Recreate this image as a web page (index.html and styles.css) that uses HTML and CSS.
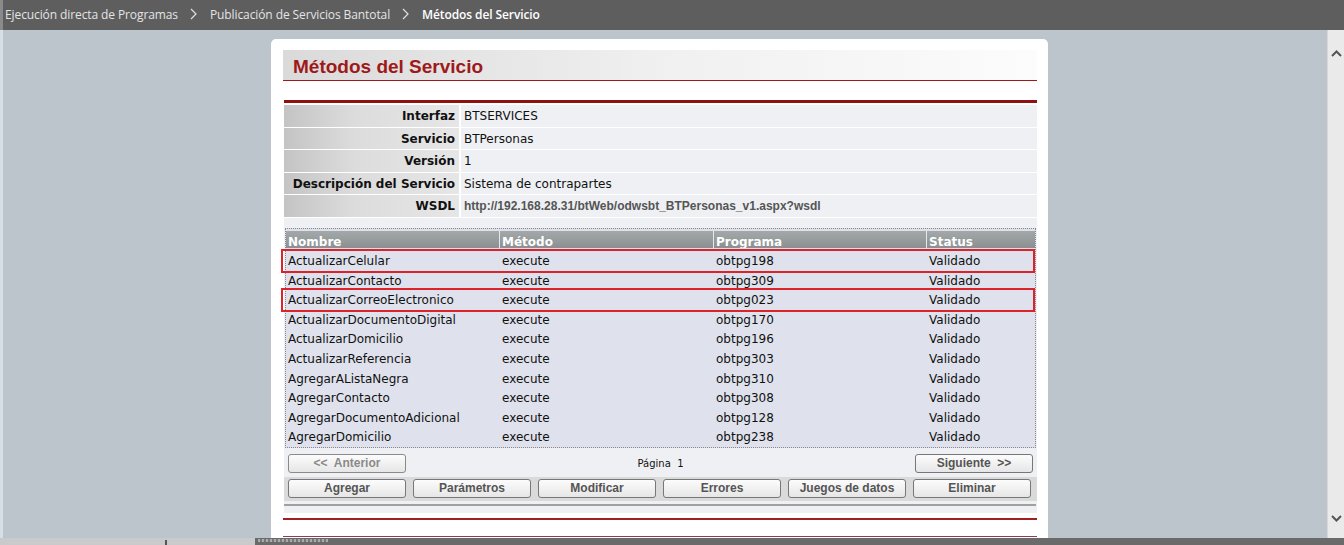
FILE: index.html
```html
<!DOCTYPE html>
<html lang="es">
<head>
<meta charset="utf-8">
<title>Métodos del Servicio</title>
<link rel="stylesheet" href="styles.css">
</head>
<body>
<div class="topbar">
  <span class="crumb">Ejecución directa de Programas</span>
  <svg class="sep" width="7" height="12" viewBox="0 0 7 12"><path d="M1 1 L6 6 L1 11" fill="none" stroke="#e0e0e0" stroke-width="1.2"/></svg>
  <span class="crumb">Publicación de Servicios Bantotal</span>
  <svg class="sep" width="7" height="12" viewBox="0 0 7 12"><path d="M1 1 L6 6 L1 11" fill="none" stroke="#e0e0e0" stroke-width="1.2"/></svg>
  <span class="crumb current">Métodos del Servicio</span>
</div>
<div class="main">
  <div class="viewport">
    <div class="card">
      <div class="title">Métodos del Servicio</div>
      <div class="redbar"></div>
      <div class="info">
        <div class="irow"><div class="lbl">Interfaz</div><div class="val">BTSERVICES</div></div>
        <div class="irow"><div class="lbl">Servicio</div><div class="val">BTPersonas</div></div>
        <div class="irow"><div class="lbl">Versión</div><div class="val">1</div></div>
        <div class="irow"><div class="lbl">Descripción del Servicio</div><div class="val">Sistema de contrapartes</div></div>
        <div class="irow"><div class="lbl">WSDL</div><div class="val link">http://192.168.28.31/btWeb/odwsbt_BTPersonas_v1.aspx?wsdl</div></div>
        <div class="spacer"></div>
      </div>
      <div class="gridwrap">
        <div class="grid">
          <div class="ghead">
            <div class="c c1">Nombre</div><div class="c c2">Método</div><div class="c c3">Programa</div><div class="c c4">Status</div>
          </div>
          <div class="grow hl"><div class="c c1">ActualizarCelular</div><div class="c c2">execute</div><div class="c c3">obtpg198</div><div class="c c4">Validado</div></div>
          <div class="grow"><div class="c c1">ActualizarContacto</div><div class="c c2">execute</div><div class="c c3">obtpg309</div><div class="c c4">Validado</div></div>
          <div class="grow hl"><div class="c c1">ActualizarCorreoElectronico</div><div class="c c2">execute</div><div class="c c3">obtpg023</div><div class="c c4">Validado</div></div>
          <div class="grow"><div class="c c1">ActualizarDocumentoDigital</div><div class="c c2">execute</div><div class="c c3">obtpg170</div><div class="c c4">Validado</div></div>
          <div class="grow"><div class="c c1">ActualizarDomicilio</div><div class="c c2">execute</div><div class="c c3">obtpg196</div><div class="c c4">Validado</div></div>
          <div class="grow"><div class="c c1">ActualizarReferencia</div><div class="c c2">execute</div><div class="c c3">obtpg303</div><div class="c c4">Validado</div></div>
          <div class="grow"><div class="c c1">AgregarAListaNegra</div><div class="c c2">execute</div><div class="c c3">obtpg310</div><div class="c c4">Validado</div></div>
          <div class="grow"><div class="c c1">AgregarContacto</div><div class="c c2">execute</div><div class="c c3">obtpg308</div><div class="c c4">Validado</div></div>
          <div class="grow"><div class="c c1">AgregarDocumentoAdicional</div><div class="c c2">execute</div><div class="c c3">obtpg128</div><div class="c c4">Validado</div></div>
          <div class="grow"><div class="c c1">AgregarDomicilio</div><div class="c c2">execute</div><div class="c c3">obtpg238</div><div class="c c4">Validado</div></div>
        </div>
        <div class="pager">
          <button class="btn disabled">&lt;&lt;&nbsp; Anterior</button>
          <span class="page">Página&nbsp; 1</span>
          <button class="btn">Siguiente&nbsp; &gt;&gt;</button>
        </div>
        <div class="actions">
          <button class="btn">Agregar</button>
          <button class="btn">Parámetros</button>
          <button class="btn">Modificar</button>
          <button class="btn">Errores</button>
          <button class="btn">Juegos de datos</button>
          <button class="btn">Eliminar</button>
        </div>
        <div class="graybar"></div>
      </div>
      <div class="redline"></div>
      <div class="footline"></div>
    </div>
  </div>
  <div class="vscroll">
    <svg class="arrow" width="11" height="7" viewBox="0 0 11 7"><path d="M1 6 L5.5 1.5 L10 6" fill="none" stroke="#555" stroke-width="2"/></svg>
    <svg class="arrow" width="11" height="7" viewBox="0 0 11 7"><path d="M1 1 L5.5 5.5 L10 1" fill="none" stroke="#555" stroke-width="2"/></svg>
  </div>
</div>
<div class="hscroll">
  <div class="hleft"><span class="mark"></span></div>
  <div class="hright"><span class="thumb"></span></div>
</div>
</body>
</html>
```

FILE: styles.css
```css
html, body {
  margin: 0;
  padding: 0;
  height: 545px;
  overflow: hidden;
  background: #bcc4cc;
}

.topbar {
  height: 30px;
  background: #5e5e5e;
  display: flex;
  align-items: center;
  padding-left: 2px;
  padding-bottom: 2px;
  font-family: "Open Sans", "Noto Sans", sans-serif;
  font-size: 12px;
  color: #e4e4e4;
  border-left: 3px solid #8a8a8a;
  box-sizing: border-box;
  letter-spacing: -0.1px;
}
.topbar .sep {
  margin: 0 13px 0 12px;
  flex: none;
}
.topbar .current { color: #fff; font-weight: 600; }

.main {
  display: flex;
  height: 508px;
  border-left: 3px solid #d6dee6;
}
.viewport {
  flex: 1;
  overflow: hidden;
  padding-left: 268px;
  padding-top: 9px;
}
.card {
  width: 777px;
  height: 600px;
  background: #fff;
  border-radius: 5px 5px 0 0;
  padding: 11px 11px 0 12px;
  box-sizing: border-box;
  font-family: "DejaVu Sans", Verdana, sans-serif;
}
.title {
  height: 30px;
  border-bottom: 1px solid #a01818;
  background: linear-gradient(to right, #dadada, #f0f0f0 50%, #fcfcfc);
  color: #9e1a1a;
  font-family: "Liberation Sans", Arial, sans-serif;
  font-weight: bold;
  font-size: 19px;
  line-height: 33px;
  padding-left: 10px;
}
.redbar {
  margin-top: 19px;
  margin-left: 1px;
  height: 3px;
  background: #8e1010;
}
.info {
  margin-left: 1px;
  padding-top: 2px;
}
.irow {
  display: flex;
  height: 21.6px;
  margin-bottom: 1px;
  gap: 2px;
}
.lbl {
  width: 175px;
  flex: none;
  text-align: right;
  padding-right: 4px;
  box-sizing: border-box;
  font-weight: bold;
  font-size: 12px;
  line-height: 22px;
  color: #111;
  background: linear-gradient(to right, #c4c4c4, #dcdcdc 40%, #e6e6e6);
}
.val {
  flex: 1;
  background: #eef0f3;
  font-size: 12px;
  line-height: 22px;
  padding-left: 3px;
  color: #111;
}
.val.link {
  font-family: "Liberation Sans", Arial, sans-serif;
  font-weight: bold;
  font-size: 12px;
  color: #555;
}
.spacer {
  height: 11px;
  background: #eef0f3;
}

.gridwrap {
  margin-left: 1px;
  margin-top: -1px;
  background: #eef0f3;
}
.grid {
  margin: 0 1px;
  border: 1px dotted #888;
  padding-top: 2px;
  background: #dfe2ec;
}
.ghead {
  display: flex;
  height: 17px;
  overflow: hidden;
  background: linear-gradient(to bottom, #a4a8a8, #8a9092);
  color: #fff;
  font-weight: bold;
  font-size: 12px;
  line-height: 22px;
  margin-bottom: 3px;
}
.ghead .c { border-right: 1px solid #e6e8ea; }
.ghead .c4 { border-right: none; }
.grow {
  display: flex;
  height: 19.6px;
  font-size: 12px;
  line-height: 20px;
  color: #111;
  box-sizing: border-box;
}
.c {
  padding-left: 2px;
  box-sizing: border-box;
  white-space: nowrap;
  overflow: hidden;
}
.c1 { width: 214px; }
.c2 { width: 214px; }
.c3 { width: 213px; }
.c4 { flex: 1; }
.grow.hl {
  outline: 2px solid #dc2329;
  margin: 0 2px 0 -3px;
  padding-left: 3px;
  position: relative;
}

.pager {
  display: flex;
  align-items: center;
  justify-content: space-between;
  padding: 5px 4px 3px 4px;
  height: 29px;
  box-sizing: border-box;
}
.page {
  font-size: 10px;
  color: #111;
}
.actions {
  display: flex;
  gap: 7px;
  background: #dadada;
  padding: 2px 4px 3px 4px;
}
.btn {
  width: 118px;
  height: 19px;
  padding: 0;
  border: 1px solid #777;
  border-radius: 3px;
  background: linear-gradient(to bottom, #fcfcfc, #e6e6e6);
  font-family: "Liberation Sans", Arial, sans-serif;
  font-weight: bold;
  font-size: 12px;
  color: #555;
}
.btn.disabled { color: #8a8a8a; border-color: #8a8a8a; }
.graybar {
  height: 2px;
  background: #a0a0a0;
  margin-top: 3px;
  margin-right: 1px;
}
.gridwrap::after {
  content: "";
  display: block;
  height: 7px;
}
.redline {
  margin-top: 5px;
  height: 2px;
  background: #9e2020;
}
.footline {
  margin-top: 16px;
  height: 1px;
  background: #8a4050;
}

.vscroll {
  width: 17px;
  flex: none;
  background: #eaeaea;
  border-left: 1px solid #d8d8d8;
  display: flex;
  flex-direction: column;
  justify-content: space-between;
  align-items: center;
  padding: 20px 0 16px 0;
  box-sizing: border-box;
}

.hscroll {
  height: 7px;
  display: flex;
}
.hleft {
  width: 255px;
  background: #c8cacc;
  position: relative;
}
.mark {
  position: absolute;
  left: 165px;
  top: 2px;
  width: 2px;
  height: 5px;
  background: #555;
}
.hright {
  flex: 1;
  background: #6a6a6a;
  position: relative;
}
.thumb {
  position: absolute;
  left: 3px;
  top: 1px;
  width: 70px;
  height: 3px;
  background: repeating-linear-gradient(to right, #aaa 0 2px, #777 2px 4px);
}
```
